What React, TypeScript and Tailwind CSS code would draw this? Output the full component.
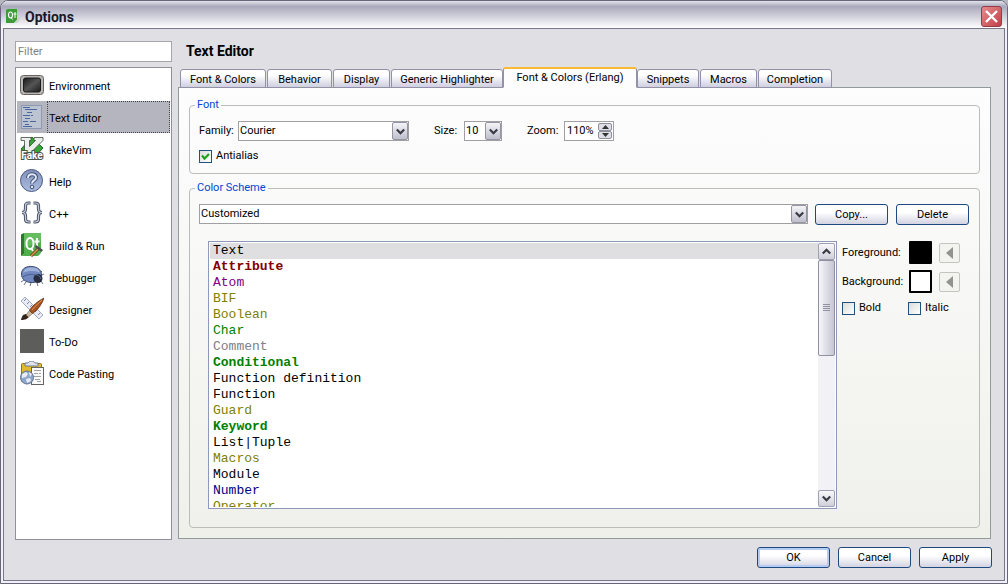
import { useState } from 'react';
import type { ReactNode } from 'react';
import clsx from 'clsx';

interface Category {
  name: string;
  icon: ReactNode;
}

interface Tab {
  name: string;
  width: string;
}

interface SchemeItem {
  name: string;
  style: string;
}

const HelpIcon = () => (
  <svg width="24" height="24" viewBox="0 0 24 24">
    <defs>
      <linearGradient id="help" x1="0" y1="0" x2="0" y2="1">
        <stop offset="0" stopColor="#8291bb" />
        <stop offset="1" stopColor="#abbcdf" />
      </linearGradient>
    </defs>
    <circle cx="11.5" cy="11.5" r="11" fill="url(#help)" stroke="#4a5a80" />
    <path d="M8 9c0-5 8-5 8-.5 0 3-4 2.800-4 6" fill="none" stroke="#3f4e75" strokeWidth="4" />
    <path d="M8 9c0-5 8-5 8-.5 0 3-4 2.800-4 6" fill="none" stroke="#dfe7f7" strokeWidth="2" />
    <circle cx="12" cy="18" r="1.800" fill="#dfe7f7" stroke="#3f4e75" />
  </svg>
);

const EnvironmentIcon = () => (
  <svg width="24" height="24" viewBox="0 0 24 24">
    <defs>
      <linearGradient id="screen" x1="0" y1="0" x2="1" y2="1">
        <stop offset="0" stopColor="#171717" />
        <stop offset=".5" stopColor="#555" />
        <stop offset="1" stopColor="#1c1c1c" />
      </linearGradient>
    </defs>
    <rect x=".5" y="2.500" width="23" height="19" rx="3" fill="#b9b7b5" stroke="#66625f" />
    <rect x="3.500" y="5" width="17" height="14" rx="2" fill="url(#screen)" stroke="#1b1b1b" />
  </svg>
);

const TextEditorIcon = () => (
  <svg width="24" height="24" viewBox="0 0 24 24">
    <rect x="1.500" y=".5" width="20" height="23" fill="#bcc4d2" stroke="#8c99b0" />
    <path
      d="M3 2.500h7M5 4.500h12M7 7.500h5M3 10.500h7M11 10.500h2M5 13.500h5M3 16.500h5M10 16.500h6M5 19.500h4M3 21.500h9"
      stroke="#4a67a0"
    />
  </svg>
);

const FakeVimIcon = () => (
  <svg width="24" height="24" viewBox="0 0 24 24">
    <path d="M12 0l11 11-11 12L1 12z" fill="#35a535" stroke="#22662a" />
    <path
      d="M1 .5h10v3H9.500v6l6-6H14V.5h9v3l-12 12H4.500v-12H1z"
      fill="#ecefec"
      stroke="#3c4d40"
      strokeWidth=".8"
    />
    <text
      x="12"
      y="21.500"
      textAnchor="middle"
      className="font-[Roboto,sans-serif] text-[10px] font-bold"
      fill="#fff"
      stroke="#4a554e"
      strokeWidth="2"
      paintOrder="stroke"
    >
      Fake
    </text>
  </svg>
);

const CppIcon = () => (
  <svg width="24" height="24" viewBox="0 0 24 24" fill="none">
    {[
      { stroke: '#4d5668', width: 3.2 },
      { stroke: '#c3cad8', width: 1.2 },
    ].map((line) => (
      <path
        key={line.stroke}
        d="M10.500 2H8.500C6 2 5.500 3 5.500 5V8c0 2-1 3.500-3.500 3.500C4.500 11.500 5.500 13 5.500 15v3C5.500 20 6 21 8.500 21h2M13.500 2h2c2.500 0 3 1 3 3v3c0 2 1 3.500 3.500 3.500-2.500 0-3.500 1.500-3.500 3.500v3c0 2-.5 3-3 3h-2"
        stroke={line.stroke}
        strokeWidth={line.width}
      />
    ))}
  </svg>
);

const BuildIcon = () => (
  <svg width="24" height="24" viewBox="0 0 24 24">
    <path d="M1 1.500L4 0v21l-3 2z" fill="#267b2e" />
    <path d="M4 0h17v20l-3 3H1l3-2z" fill="#4fae4c" />
    <path d="M4 0h17v8L4 15z" fill="#74c66e" opacity=".6" />
    <ellipse cx="10" cy="10.500" rx="3.500" ry="5.500" fill="none" stroke="#fff" strokeWidth="2" />
    <path d="M11 15l2 3M17 5v10M14.500 8.500h5" stroke="#fff" strokeWidth="1.800" />
    <path d="M11 23l8-8" stroke="#6c3e18" strokeWidth="3" />
    <path d="M11 23l8-8" stroke="#d99650" strokeWidth="1.500" />
    <path d="M16 12l7 5-1.500 2-6.500-5z" fill="#4a4d50" />
  </svg>
);

const DebuggerIcon = () => (
  <svg width="24" height="24" viewBox="0 0 24 24">
    <path
      d="M4 15l-3 2M6 17l-2 3M11 18l-1 3M20 8l2-2M22 10l2-1M21 16l2 3M17 18l1 3"
      stroke="#6b7384"
    />
    <path d="M1.500 9C1.500 3 7 1 12 1.500c6 .5 10 4 9.500 9S16 18 11 17.500C5 17 1.500 14 1.500 9z" fill="#7189bf" stroke="#3c4c74" />
    <path d="M3 8C4 3 9 2 13 2.500c4 .5 6 2 7 5-6-2-12-2-17 .5z" fill="#a9bce2" opacity=".8" />
    <path d="M2.500 12C8 9 12 9 15 10" fill="none" stroke="#4a5d8c" />
    <circle cx="18" cy="13.500" r="4.500" fill="#262d3e" />
    <path d="M14 10c4-1 6 1 7 4" fill="none" stroke="#65718f" />
  </svg>
);

const DesignerIcon = () => (
  <svg width="24" height="24" viewBox="0 0 24 24">
    <path d="M1 4l4-4 18 18-4 4z" fill="#e8ebf5" stroke="#a4abbe" />
    <path d="M6 2L4 4M9 5L7 7M12 8l-2 2M17 13l-2 2M20 16l-2 2" stroke="#8089a0" />
    <path d="M1 23c1-4 2-6 6-6l2 2c-1 3-4 4-8 4z" fill="#33251a" />
    <path d="M6 18l3.500-4.500 3 3L8.500 20z" fill="#c9b89c" stroke="#61503c" strokeWidth=".5" />
    <path d="M9.500 13.500C12 9 18 4 24 1c-2 6-6 12-11.500 15.500z" fill="#a75320" stroke="#592a12" strokeWidth=".7" />
    <path d="M12 13c3-4 7-7 10-10" stroke="#e39b62" fill="none" />
  </svg>
);

const TodoIcon = () => (
  <svg width="24" height="24" viewBox="0 0 24 24">
    <rect width="24" height="24" fill="#5d5d5c" />
  </svg>
);

const PastingIcon = () => (
  <svg width="24" height="24" viewBox="0 0 24 24">
    <rect x="1.500" y="2.500" width="20" height="18" rx="1" fill="#e3b92c" stroke="#8f741c" />
    <path d="M5 5V2h3c1-2.500 6-2.500 7 0h3v3z" fill="#dfe3ee" stroke="#707a93" />
    <rect x="11.500" y="6.500" width="12" height="17" fill="#fafafa" stroke="#646464" />
    <path d="M14 9.500h7M14 12.500h4M19 12.500h2M14 15.500h7M15 18.500h5M17 20.500h4" stroke="#a0a0a0" />
    <circle cx="7" cy="16.500" r="6.500" fill="#8ea6ca" stroke="#5f7292" />
    <path d="M2 13l4-2 2 2-2 3-4 1zM9 11l3 2-2 3zM6 18l4-1 1 3-4 2z" fill="#e6edf5" />
  </svg>
);

const AppIcon = () => (
  <svg width="14" height="15" viewBox="0 0 14 15">
    <path d="M0 1l2-1h9v11l-3 3H0z" fill="#3f9a3a" />
    <ellipse cx="4.500" cy="6" rx="2" ry="3" fill="none" stroke="#fff" strokeWidth="1.200" />
    <path d="M5 8.500l1.500 2M9 3v6M7.500 5h3" stroke="#fff" />
    <path d="M8 14l6-7v3l-3 4z" fill="#c9d2c5" />
  </svg>
);

const Chevron = ({ up = false }: { up?: boolean }) => (
  <svg width="9" height="7" viewBox="0 0 9 7" fill="none" stroke="#3a3a45" strokeWidth="2.200">
    <path d={up ? 'M.8 5.500L4.500 1.800 8.200 5.500' : 'M.8 1.500L4.500 5.200 8.200 1.500'} />
  </svg>
);

const categories: Category[] = [
  { name: 'Environment', icon: <EnvironmentIcon /> },
  { name: 'Text Editor', icon: <TextEditorIcon /> },
  { name: 'FakeVim', icon: <FakeVimIcon /> },
  { name: 'Help', icon: <HelpIcon /> },
  { name: 'C++', icon: <CppIcon /> },
  { name: 'Build & Run', icon: <BuildIcon /> },
  { name: 'Debugger', icon: <DebuggerIcon /> },
  { name: 'Designer', icon: <DesignerIcon /> },
  { name: 'To-Do', icon: <TodoIcon /> },
  { name: 'Code Pasting', icon: <PastingIcon /> },
];

const tabs: Tab[] = [
  { name: 'Font & Colors', width: 'w-[86px]' },
  { name: 'Behavior', width: 'w-[65px]' },
  { name: 'Display', width: 'w-[57px]' },
  { name: 'Generic Highlighter', width: 'w-[112px]' },
  { name: 'Font & Colors (Erlang)', width: 'w-[134px]' },
  { name: 'Snippets', width: 'w-[62px]' },
  { name: 'Macros', width: 'w-[57px]' },
  { name: 'Completion', width: 'w-[74px]' },
];

const schemeItems: SchemeItem[] = [
  { name: 'Text', style: 'text-black' },
  { name: 'Attribute', style: 'text-[#800000] font-bold' },
  { name: 'Atom', style: 'text-[#800080]' },
  { name: 'BIF', style: 'text-[#808000]' },
  { name: 'Boolean', style: 'text-[#808000]' },
  { name: 'Char', style: 'text-[#008000]' },
  { name: 'Comment', style: 'text-[#808080]' },
  { name: 'Conditional', style: 'text-[#008000] font-bold' },
  { name: 'Function definition', style: 'text-black' },
  { name: 'Function', style: 'text-black' },
  { name: 'Guard', style: 'text-[#808000]' },
  { name: 'Keyword', style: 'text-[#008000] font-bold' },
  { name: 'List|Tuple', style: 'text-black' },
  { name: 'Macros', style: 'text-[#808000]' },
  { name: 'Module', style: 'text-black' },
  { name: 'Number', style: 'text-[#000080]' },
  { name: 'Operator', style: 'text-[#808000]' },
];

function PushButton({ label, primary = false }: { label: string; primary?: boolean }) {
  return (
    <button
      className={clsx(
        'h-[21px] w-[73px] shrink-0 rounded-[3px] border border-[#1c4a80] bg-linear-to-b from-white from-40% to-[#d3d3e2]',
        primary && 'shadow-[inset_0_0_0_2px_#b4cbf2]',
      )}
    >
      {label}
    </button>
  );
}

function ComboBox({ id, value, className, label }: { id: string; value: string; className: string; label?: string }) {
  return (
    <div className={clsx('relative h-5', className)}>
      <select
        id={id}
        aria-label={label}
        className="h-full w-full appearance-none border border-[#a0a0a4] bg-white pl-px outline-none"
      >
        <option>{value}</option>
      </select>
      <span className="pointer-events-none absolute inset-y-px right-px flex w-4 items-center justify-center rounded-[2px] border border-[#9494a3] bg-linear-to-b from-[#f4f4f8] to-[#bfbfcd]">
        <Chevron />
      </span>
    </div>
  );
}

function CheckBox({ id, label, checked = false }: { id: string; label: string; checked?: boolean }) {
  const [on, setOn] = useState(checked);
  return (
    <label htmlFor={id} className="flex items-center gap-1">
      <span className="relative flex size-[13px]">
        <input
          id={id}
          type="checkbox"
          checked={on}
          onChange={(e) => setOn(e.target.checked)}
          className="size-full appearance-none border border-[#1c5180] bg-linear-to-br from-[#dcdcd8] to-white"
        />
        {on && (
          <svg className="pointer-events-none absolute inset-0" width="13" height="13" viewBox="0 0 13 13">
            <path d="M3 5.500l2.500 3L10 4" fill="none" stroke="#21a121" strokeWidth="2.200" />
          </svg>
        )}
      </span>
      {label}
    </label>
  );
}

function ColorRow({ label, color }: { label: string; color: string }) {
  return (
    <div className="flex items-center">
      <span className="w-[67px]">{label}</span>
      <button aria-label={label} className={clsx('size-[23px] rounded-[1px] border-2 border-black', color)} />
      <button
        aria-label={`Unset ${label}`}
        className="ml-[7px] flex h-5 w-[21px] items-center justify-center rounded-[2px] border border-[#c5c5c0] bg-[#f3f3f0]"
      >
        <svg width="8" height="12" viewBox="0 0 8 12">
          <path d="M7 0v12L0 6z" fill="#92928f" />
        </svg>
      </button>
    </div>
  );
}

export default function App() {
  const [category, setCategory] = useState('Text Editor');
  const [tab, setTab] = useState('Font & Colors (Erlang)');
  const [selected, setSelected] = useState('Text');
  const [zoom, setZoom] = useState(110);

  return (
    <div className="h-screen bg-[#b8b8c0] font-[Roboto,'Liberation_Sans',sans-serif] text-[11px] leading-[14px] text-black">
      <div className="flex h-full flex-col overflow-hidden rounded-t-lg border border-[#66657a] bg-[#f0f0f6]">
        {/* Title bar */}
        <header className="flex h-[27px] shrink-0 items-center bg-linear-to-b from-[#e4e4ec] via-[#a9a9bc] via-20% to-white pt-1 pr-[5px] pl-[5px]">
          <AppIcon />
          <h1 className="ml-[5px] flex-1 text-[14px] font-bold text-[#18182a]">Options</h1>
          <button
            aria-label="Close"
            className="flex size-[21px] items-center justify-center rounded-[3px] border border-[#933c48] bg-linear-to-br from-[#e58a8e] to-[#c13e48]"
          >
            <svg width="13" height="13" viewBox="0 0 13 13" stroke="#fff" strokeWidth="2.400">
              <path d="M1 1l11 11M12 1L1 12" />
            </svg>
          </button>
        </header>

        <div className="mx-[2px] mb-[2px] flex min-h-0 flex-1 flex-col border border-[#77768a] bg-[#dfdfe4] pt-3 pr-3 pb-3 pl-[11px]">
          <div className="flex min-h-0 flex-1 gap-[6px]">
            {/* Categories */}
            <aside className="flex w-[157px] shrink-0 flex-col gap-[5px]">
              <input
                aria-label="Filter"
                placeholder="Filter"
                className="h-[21px] w-full shrink-0 border border-[#a5a5ab] bg-white px-[2px] outline-none placeholder:text-[#808080]"
              />
              <nav className="flex-1 border border-[#8f909c] bg-white p-px">
                {categories.map((item) => (
                  <button
                    key={item.name}
                    onClick={() => setCategory(item.name)}
                    className={clsx(
                      'flex h-8 w-full items-stretch pl-[3px] text-left',
                      item.name === category && 'bg-[#b5b5bf]',
                    )}
                  >
                    <span className="flex w-[27px] items-center">{item.icon}</span>
                    <span
                      className={clsx(
                        'flex flex-1 items-center border pt-1 pl-px',
                        item.name === category ? 'border-dotted border-[#44444a]' : 'border-transparent',
                      )}
                    >
                      {item.name}
                    </span>
                  </button>
                ))}
              </nav>
            </aside>

            <main className="flex min-w-0 flex-1 flex-col pr-px pb-px">
              <h2 className="h-[26px] shrink-0 pt-[3px] pl-2 text-[14px] font-bold">Text Editor</h2>

              {/* Tabs */}
              <div role="tablist" className="relative -mb-px flex items-end pl-[2px]">
                {tabs.map((item, i) => (
                  <button
                    key={item.name}
                    role="tab"
                    aria-selected={item.name === tab}
                    onClick={() => setTab(item.name)}
                    className={clsx(
                      'shrink-0 whitespace-nowrap rounded-t-[3px] border border-[#9191a7]',
                      item.width,
                      item.name === tab
                        ? 'h-[21px] border-t-2 border-t-[#f9b935] border-b-transparent bg-[#fdfdfe]'
                        : 'h-[19px] bg-linear-to-b from-white from-30% to-[#cfcfe0] pt-[2px]',
                      i !== 3 && i !== 4 && 'mr-px',
                    )}
                  >
                    {item.name}
                  </button>
                ))}
              </div>

              <section className="flex min-h-0 flex-1 flex-col gap-[7px] border border-[#919b9c] bg-linear-to-b from-[#fdfdfe] to-[#f0f0eb] px-[10px] pt-[10px] pb-[10px]">
                <fieldset className="shrink-0 rounded-[4px] border border-[#bcbcb9] px-[9px] pb-[10px]">
                  <legend className="-ml-1 px-[2px] text-[#0046d5]">Font</legend>
                  <div className="flex items-center pt-[9px]">
                    <label htmlFor="family" className="w-[39px]">Family:</label>
                    <ComboBox id="family" value="Courier" className="w-[171px]" />
                    <label htmlFor="size" className="ml-[25px] w-[30px]">Size:</label>
                    <ComboBox id="size" value="10" className="w-[38px]" />
                    <label htmlFor="zoom" className="ml-[25px] w-[37px]">Zoom:</label>
                    <div className="flex h-5 w-[50px] items-center border border-[#a0a0a4] bg-white pr-px">
                      <input
                        id="zoom"
                        value={`${zoom}%`}
                        onChange={(e) => setZoom(parseInt(e.target.value) || 0)}
                        className="w-0 flex-1 pl-[2px] outline-none"
                      />
                      <div className="flex w-[14px] flex-col">
                        <button
                          aria-label="Zoom in"
                          onClick={() => setZoom(zoom + 10)}
                          className="flex h-2 items-center justify-center rounded-[2px] border border-[#8f8f9c] bg-[#dedee6]"
                        >
                          <svg width="7" height="4" viewBox="0 0 7 4"><path d="M0 4l3.500-4L7 4z" fill="#333" /></svg>
                        </button>
                        <button
                          aria-label="Zoom out"
                          onClick={() => setZoom(zoom - 10)}
                          className="flex h-2 items-center justify-center rounded-[2px] border border-[#8f8f9c] bg-[#dedee6]"
                        >
                          <svg width="7" height="4" viewBox="0 0 7 4"><path d="M0 0l3.500 4L7 0z" fill="#333" /></svg>
                        </button>
                      </div>
                    </div>
                  </div>
                  <div className="pt-2">
                    <CheckBox id="antialias" label="Antialias" checked />
                  </div>
                </fieldset>

                <fieldset className="flex min-h-0 min-w-0 flex-1 flex-col rounded-[4px] border border-[#bcbcb9] px-[9px] pb-[18px]">
                  <legend className="-ml-1 px-[2px] text-[#0046d5]">Color Scheme</legend>
                  <div className="flex shrink-0 pt-[9px] pr-px">
                    <ComboBox id="scheme" label="Color Scheme" value="Customized" className="mr-[7px] flex-1" />
                    <PushButton label="Copy..." />
                    <span className="w-2" />
                    <PushButton label="Delete" />
                  </div>

                  <div className="flex min-h-0 flex-1 gap-[5px] pt-4 pl-[9px]">
                    <div className="flex min-w-0 flex-1 border border-[#8e98b8] bg-white p-px">
                      <ul className="min-w-0 flex-1 overflow-y-auto font-['Liberation_Mono',monospace] text-[13px] leading-4 [scrollbar-width:none]">
                        {schemeItems.map((item) => (
                          <li
                            key={item.name}
                            onClick={() => setSelected(item.name)}
                            className={clsx('h-4 pl-[3px]', item.style, item.name === selected && 'bg-[#dfdfe2]')}
                          >
                            {item.name}
                          </li>
                        ))}
                      </ul>
                      {/* Scroll bar */}
                      <div className="flex w-[17px] shrink-0 flex-col bg-[#f1f1f6]">
                        <button
                          aria-label="Scroll up"
                          className="flex h-[17px] items-center justify-center rounded-[2px] border border-[#a0a0b0] bg-linear-to-b from-[#f8f8fb] to-[#d0d0dc]"
                        >
                          <Chevron up />
                        </button>
                        <div className="flex h-24 items-center justify-center rounded-[2px] border border-[#8f8fa0] bg-linear-to-r from-[#f6f6fa] to-[#c6c6d4]">
                          <svg width="7" height="8" viewBox="0 0 7 8" stroke="#9292a3">
                            <path d="M0 .5h7M0 2.500h7M0 4.500h7M0 6.500h7" />
                          </svg>
                        </div>
                        <span className="flex-1" />
                        <button
                          aria-label="Scroll down"
                          className="flex h-[17px] items-center justify-center rounded-[2px] border border-[#a0a0b0] bg-linear-to-b from-[#f8f8fb] to-[#d0d0dc]"
                        >
                          <Chevron />
                        </button>
                      </div>
                    </div>

                    <div className="flex w-[128px] shrink-0 flex-col gap-[6px]">
                      <ColorRow label="Foreground:" color="bg-black" />
                      <ColorRow label="Background:" color="bg-white" />
                      <div className="grid grid-cols-[66px_1fr] pt-[2px]">
                        <CheckBox id="bold" label="Bold" />
                        <CheckBox id="italic" label="Italic" />
                      </div>
                    </div>
                  </div>
                </fieldset>
              </section>
            </main>
          </div>

          {/* Dialog buttons */}
          <footer className="flex shrink-0 justify-end gap-2 pt-[7px]">
            <PushButton label="OK" primary />
            <PushButton label="Cancel" />
            <PushButton label="Apply" />
          </footer>
        </div>
      </div>
    </div>
  );
}
